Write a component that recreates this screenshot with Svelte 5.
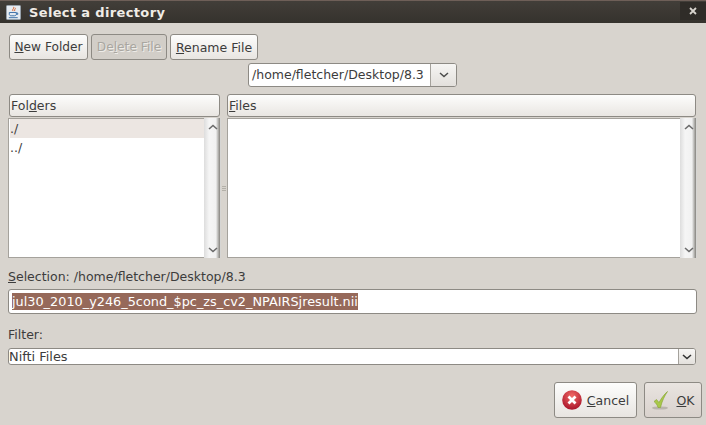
<script>
	const folders = ['./', '../'];
</script>

<div class="dialog">
	<header class="titlebar">
		<svg class="java" viewBox="0 0 16 16" aria-hidden="true">
			<rect x="0.5" y="0.5" width="15" height="15" rx="1" fill="#e6ebf1" stroke="#98a2ad" />
			<path d="M8 2c1.500 1.500-2 2.500-.6 4.500M9.800 3c.8 1-1.300 1.700-.5 3.500" fill="none" stroke="#d9602a" stroke-width="1" />
			<path d="M3.500 8h7.500v2c0 1-1 1.500-2 1.500H5.500c-1 0-2-.5-2-1.500zM11 8.500h1.500v1.500H11" fill="none" stroke="#3b6ea5" stroke-width="1" />
			<path d="M3 13.500h9.500" stroke="#3b6ea5" stroke-width="1" />
		</svg>
		<span class="title">Select a directory</span>
		<span class="close">
			<svg viewBox="0 0 8 8" aria-hidden="true"><path d="M1 1l6 6M7 1L1 7" stroke="#d8d4ce" stroke-width="1.800" /></svg>
		</span>
	</header>

	<main class="body">
		<div class="toolbar">
			<button class="btn new"><u>N</u>ew Folder</button>
			<button class="btn delete" disabled>De<u>l</u>ete File</button>
			<button class="btn rename"><u>R</u>ename File</button>
		</div>

		<div class="path-row">
			<div class="path-combo">
				<span class="path-value">/home/fletcher/Desktop/8.3</span>
				<span class="path-arrow">
					<svg viewBox="0 0 10 6" aria-hidden="true"><path d="M1 1l4 3.500L9 1" fill="none" stroke="#4c4c4c" stroke-width="1.500" /></svg>
				</span>
			</div>
		</div>

		<div class="panes">
			<section class="pane left">
				<div class="col-head">Fol<u>d</u>ers</div>
				<div class="listwrap">
					<ul class="list">
						{#each folders as f, i}
							<li class:sel={i === 0}>{f}</li>
						{/each}
					</ul>
					<div class="scrollbar">
						<svg viewBox="0 0 10 6" aria-hidden="true"><path d="M1 5l4-3.500L9 5" fill="none" stroke="#6b6b6b" stroke-width="1.600" /></svg>
						<svg viewBox="0 0 10 6" aria-hidden="true"><path d="M1 1l4 3.500L9 1" fill="none" stroke="#6b6b6b" stroke-width="1.600" /></svg>
					</div>
				</div>
			</section>

			<div class="splitter"><i></i><i></i><i></i></div>

			<section class="pane right">
				<div class="col-head"><u>F</u>iles</div>
				<div class="listwrap">
					<ul class="list"></ul>
					<div class="scrollbar">
						<svg viewBox="0 0 10 6" aria-hidden="true"><path d="M1 5l4-3.500L9 5" fill="none" stroke="#6b6b6b" stroke-width="1.600" /></svg>
						<svg viewBox="0 0 10 6" aria-hidden="true"><path d="M1 1l4 3.500L9 1" fill="none" stroke="#6b6b6b" stroke-width="1.600" /></svg>
					</div>
				</div>
			</section>
		</div>

		<div class="sel-label"><u>S</u>election: /home/fletcher/Desktop/8.3</div>
		<div class="sel-input"><span class="selected">jul30_2010_y246_5cond_$pc_zs_cv2_NPAIRSjresult.nii</span></div>

		<div class="filter-label">Filter:</div>
		<div class="filter-combo">
			<span class="filter-value">Nifti Files</span>
			<span class="filter-arrow">
				<svg viewBox="0 0 10 6" aria-hidden="true"><path d="M1 1l4 3.500L9 1" fill="none" stroke="#333" stroke-width="1.600" /></svg>
			</span>
		</div>

		<div class="actions">
			<button class="btn action cancel">
				<svg viewBox="0 0 20 20" aria-hidden="true">
					<defs>
						<radialGradient id="red" cx="50%" cy="30%" r="70%">
							<stop offset="0" stop-color="#f26a66" />
							<stop offset="1" stop-color="#a9142a" />
						</radialGradient>
					</defs>
					<circle cx="10" cy="10" r="9.800" fill="url(#red)" />
					<path d="M6.500 6.500l7 7M13.500 6.500l-7 7" stroke="#fff" stroke-width="2.800" />
				</svg>
				<span><u>C</u>ancel</span>
			</button>
			<button class="btn action ok">
				<svg viewBox="0 0 20 20" aria-hidden="true">
					<ellipse cx="9" cy="18" rx="8" ry="1.600" fill="#b9b4ac" />
					<path d="M3 11.500l2.500-2 2.500 3C10.500 8 13 4.500 16.500 1.500c-3 4.500-5.500 9.500-7 16H7C6.300 15 5 13 3 11.500z" fill="#a9c94a" stroke="#84a130" stroke-width="0.600" />
				</svg>
				<span><u>O</u>K</span>
			</button>
		</div>
	</main>
</div>

<style>
	:global(body) {
		margin: 0;
		background: #d8d4ce;
	}

	.dialog {
		width: 706px;
		height: 425px;
		overflow: hidden;
		font-family: "DejaVu Sans", sans-serif;
		font-size: 12.5px;
		color: #3c3c3c;
		background: #d8d4ce;
	}

	.titlebar {
		height: 23px;
		box-sizing: border-box;
		display: flex;
		align-items: center;
		padding-left: 6px;
		border-top: 1px solid #6e5f58;
		background: linear-gradient(#423e39, #35322d);
	}

	.java {
		width: 15px;
		height: 15px;
	}

	.title {
		margin-left: 8px;
		font-size: 13px;
		font-weight: bold;
		letter-spacing: 0.35px;
		color: #f0ece6;
	}

	.close {
		margin-left: auto;
		width: 26px;
		height: 18px;
		margin-top: -3px;
		display: flex;
		align-items: center;
		justify-content: center;
		background: #2f2c28;
	}

	.close svg {
		width: 8px;
		height: 8px;
	}

	.body {
		padding: 11px 9px 0 9px;
	}

	.btn {
		font: inherit;
		color: #3c3c3c;
		padding: 0;
		border: 1px solid #8d8a84;
		border-radius: 3px;
		background: linear-gradient(#fdfdfc, #e8e5e1);
		box-sizing: border-box;
	}

	.toolbar {
		display: flex;
		gap: 3px;
		height: 26px;
	}

	.new {
		width: 79px;
		font-size: 12.2px;
	}

	.delete {
		width: 76px;
		font-size: 12.2px;
		color: #a9a6a0;
		background: #d2cec8;
		text-shadow: 1px 1px 0 #eeece8;
	}

	.rename {
		width: 88px;
	}

	.path-row {
		display: flex;
		height: 24px;
		margin-top: 3px;
		padding-left: 239px;
	}

	.path-combo {
		width: 209px;
		display: flex;
		box-sizing: border-box;
		border: 1px solid #8d8a84;
		border-radius: 3px;
		overflow: hidden;
		background: #fff;
	}

	.path-value {
		flex: 1;
		line-height: 22px;
		padding-left: 3px;
		border-right: 1px solid #a5a29c;
	}

	.path-arrow {
		width: 25px;
		display: flex;
		align-items: center;
		justify-content: center;
		background: linear-gradient(#f6f5f3, #e3e0dc);
	}

	.path-arrow svg {
		width: 10px;
		height: 6px;
	}

	.panes {
		display: flex;
		margin-top: 7px;
		margin-left: -1px;
		margin-right: -1px;
	}

	.pane {
		display: flex;
		flex-direction: column;
	}

	.left {
		width: 213px;
	}

	.right {
		width: 470px;
	}

	.splitter {
		width: 6px;
		display: flex;
		flex-direction: column;
		justify-content: center;
		gap: 1px;
		padding: 24px 1px 0;
		box-sizing: border-box;
	}

	.splitter i {
		display: block;
		height: 1px;
		background: #b3b0a8;
	}

	.col-head {
		height: 23px;
		box-sizing: border-box;
		margin: 0 1px;
		line-height: 21px;
		padding-left: 1px;
		border: 1px solid #8d8a84;
		border-radius: 3px;
		background: linear-gradient(#fdfdfc, #e9e6e2);
	}

	.right .col-head {
		margin-left: 0;
	}

	.listwrap {
		height: 140px;
		margin-top: 1px;
		display: flex;
	}

	.list {
		flex: 1;
		list-style: none;
		margin: 0;
		padding: 0 0 0 1px;
		box-sizing: border-box;
		background: #fff;
		border: 1px solid #a5a29c;
		border-right: 0;
	}

	.list li {
		height: 19px;
		line-height: 19px;
	}

	.list li.sel {
		background: #ece6e2;
	}

	.scrollbar {
		width: 17px;
		box-sizing: border-box;
		display: flex;
		flex-direction: column;
		justify-content: space-between;
		align-items: center;
		padding: 6px 0 5px;
		background: linear-gradient(90deg, #ddd 0, #f5f5f5 30%, #f1f1f1 70%, #8f8d88 92%, #fff 100%);
	}

	.scrollbar svg {
		width: 10px;
		height: 6px;
	}

	.sel-label {
		margin-top: 11px;
		line-height: 15px;
		margin-left: -1px;
	}

	.sel-input {
		height: 25px;
		margin: 5px 0 0 -1px;
		box-sizing: border-box;
		border: 1px solid #8d8a84;
		border-radius: 3px;
		background: #fff;
		padding: 3px 3px;
		line-height: 17px;
	}

	.selected {
		display: inline-block;
		background: #96695a;
		color: #fff;
		font-size: 12.85px;
	}

	.filter-label {
		margin-top: 13px;
		line-height: 15px;
		margin-left: -1px;
	}

	.filter-combo {
		height: 17px;
		margin: 6px 1px 0 -1px;
		display: flex;
		box-sizing: border-box;
		border: 1px solid #8d8a84;
		border-radius: 3px;
		overflow: hidden;
		background: #fff;
	}

	.filter-value {
		flex: 1;
		line-height: 15px;
		font-size: 12.9px;
	}

	.filter-arrow {
		width: 16px;
		display: flex;
		align-items: center;
		justify-content: center;
		border-left: 1px solid #a5a29c;
		background: linear-gradient(#f8f7f5, #e3e0dc);
	}

	.filter-arrow svg {
		width: 10px;
		height: 6px;
	}

	.actions {
		display: flex;
		justify-content: flex-end;
		gap: 7px;
		margin-top: 17px;
		margin-right: -5px;
		height: 36px;
	}

	.action {
		display: flex;
		align-items: center;
		justify-content: center;
		gap: 5px;
	}

	.action svg {
		width: 20px;
		height: 20px;
	}

	.cancel {
		width: 83px;
	}

	.ok {
		width: 58px;
		background: linear-gradient(#e9e4e0, #d9d2cd);
	}
</style>
